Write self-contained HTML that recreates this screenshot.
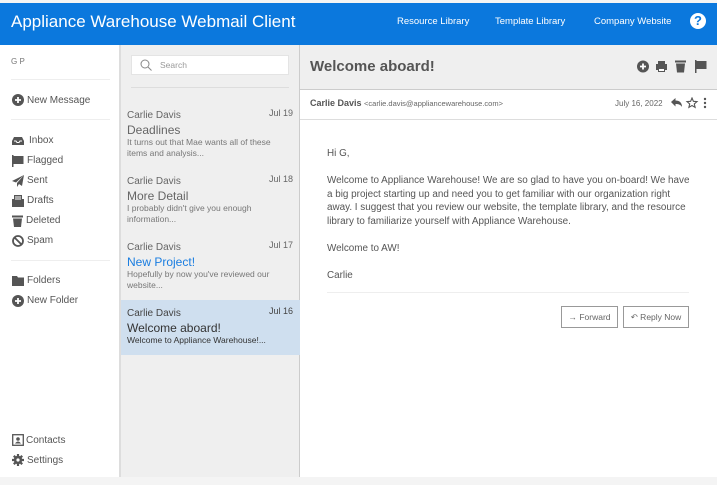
<!DOCTYPE html>
<html><head><style>
*{margin:0;padding:0;box-sizing:border-box}
body{width:717px;height:485px;overflow:hidden;background:#f4f4f4;font-family:"Liberation Sans",sans-serif;color:#555;position:relative}
.a{position:absolute;white-space:nowrap}
#hdr{left:0;top:3px;width:717px;height:42px;background:#0b78dd}
#side{left:0;top:45px;width:121px;height:432px;background:#fff;border-right:2px solid #ddd}
#list{left:121px;top:45px;width:179px;height:432px;background:#efefef;border-right:1px solid #ccc}
#main{left:300px;top:45px;width:417px;height:432px;background:#fff}
.nav{font-size:10px;color:#555}
.ic{position:absolute;left:12px;width:12px;height:12px}
.hr{position:absolute;height:1px;background:#eee}
.sn{font-size:10px;color:#666}
.dt{font-size:9px;color:#666}
.sub{font-size:12px;color:#666}
.pv{font-size:8.5px;color:#777;line-height:11px;white-space:normal;width:160px}
.btn{position:absolute;top:261px;height:22px;border:1px solid #999;font-size:8.5px;color:#666;text-align:center;line-height:20px;background:#fff}
</style></head><body>
<div class="a" id="hdr">
<div class="a" style="left:11px;top:9px;font-size:17px;color:#fff">Appliance Warehouse Webmail Client</div>
<div class="a" style="left:397px;top:13px;font-size:9.5px;color:#fff">Resource Library</div>
<div class="a" style="left:495px;top:13px;font-size:9.5px;color:#fff">Template Library</div>
<div class="a" style="left:594px;top:13px;font-size:9.5px;color:#fff">Company Website</div>
<div class="a" style="left:690px;top:10px;width:16px;height:16px;border-radius:50%;background:#fff;color:#0b78dd;font-weight:bold;font-size:13px;text-align:center;line-height:16px">?</div>
</div>
<div class="a" id="side">
<div class="a" style="left:11px;top:12px;font-size:8px;color:#777">G P</div>
<div class="hr" style="left:11px;top:34px;width:99px"></div>
<div class="hr" style="left:11px;top:74px;width:99px"></div>
<div class="hr" style="left:11px;top:215px;width:99px"></div>
<svg class="ic" style="top:49px" viewBox="0 0 12 12"><circle cx="6" cy="6" r="6" fill="#555"/><path d="M6 3v6M3 6h6" stroke="#fff" stroke-width="1.8"/></svg>
<div class="a nav" style="left:27px;top:50px">New Message</div>
<svg class="ic" style="top:90px" viewBox="0 0 12 12"><path d="M0 6l2-4h8l2 4v4H0z" fill="#555"/><path d="M2 6h2l1 1.5h2L8 6h2" stroke="#fff" stroke-width="1" fill="none"/></svg>
<div class="a nav" style="left:29px;top:90px">Inbox</div>
<svg class="ic" style="top:110px" viewBox="0 0 12 12"><path d="M0 0h1.5v12H0zM1.5 1h10v8h-10z" fill="#555"/></svg>
<div class="a nav" style="left:27px;top:110px">Flagged</div>
<svg class="ic" style="top:130px" viewBox="0 0 12 12"><path d="M12 0L0 6l4 1.5L12 0 5 8v4l2-3 3 2z" fill="#555"/></svg>
<div class="a nav" style="left:27px;top:130px">Sent</div>
<svg class="ic" style="top:150px" viewBox="0 0 12 12"><rect x="0" y="4" width="12" height="8" fill="#555"/><rect x="2" y="0" width="8" height="6" fill="#555"/><path d="M3 2h6M3 4h6" stroke="#fff"/></svg>
<div class="a nav" style="left:27px;top:150px">Drafts</div>
<svg class="ic" style="top:170px" viewBox="0 0 12 12"><rect x="0" y="0.5" width="11" height="2" fill="#555"/><path d="M1 3.5h9l-1 8.5H2z" fill="#555"/></svg>
<div class="a nav" style="left:26px;top:170px">Deleted</div>
<svg class="ic" style="top:190px" viewBox="0 0 12 12"><circle cx="6" cy="6" r="5" stroke="#555" stroke-width="1.8" fill="none"/><path d="M2.5 2.5l7 7" stroke="#555" stroke-width="1.8"/></svg>
<div class="a nav" style="left:27px;top:190px">Spam</div>
<svg class="ic" style="top:230px" viewBox="0 0 12 12"><path d="M0 1h5l1 1.5h6V11H0z" fill="#555"/></svg>
<div class="a nav" style="left:27px;top:230px">Folders</div>
<svg class="ic" style="top:250px" viewBox="0 0 12 12"><circle cx="6" cy="6" r="6" fill="#555"/><path d="M6 3v6M3 6h6" stroke="#fff" stroke-width="1.8"/></svg>
<div class="a nav" style="left:27px;top:250px">New Folder</div>
<svg class="ic" style="top:389px" viewBox="0 0 12 12"><rect x="0.7" y="0.7" width="10.6" height="10.6" stroke="#555" stroke-width="1.3" fill="none"/><circle cx="6" cy="5" r="1.8" fill="#555"/><path d="M3 9.5q3-4 6 0z" fill="#555"/></svg>
<div class="a nav" style="left:26px;top:390px">Contacts</div>
<svg class="ic" style="top:409px" viewBox="0 0 12 12"><circle cx="6" cy="6" r="4.2" fill="#555"/><path d="M6 0v12M0 6h12M1.8 1.8l8.4 8.4M10.2 1.8l-8.4 8.4" stroke="#555" stroke-width="2.2"/><circle cx="6" cy="6" r="1.6" fill="#fff"/></svg>
<div class="a nav" style="left:27px;top:410px">Settings</div>
</div>
<div class="a" id="list">
<div class="a" style="left:10px;top:10px;width:158px;height:20px;background:#fff;border:1px solid #e4e4e4"></div>
<svg class="a" style="left:19px;top:14px" width="12" height="12" viewBox="0 0 12 12"><circle cx="5" cy="5" r="4" stroke="#888" fill="none"/><path d="M8 8l3.5 3.5" stroke="#888"/></svg>
<div class="a" style="left:39px;top:15px;font-size:8.5px;color:#999">Search</div>
<div class="hr" style="left:10px;top:42px;width:158px;background:#ddd"></div>
<div class="a sn" style="left:6px;top:65px">Carlie Davis</div><div class="a dt" style="left:148px;top:63px">Jul 19</div>
<div class="a sub" style="left:6px;top:78px">Deadlines</div>
<div class="a pv" style="left:6px;top:92px">It turns out that Mae wants all of these items and analysis...</div>
<div class="a sn" style="left:6px;top:131px">Carlie Davis</div><div class="a dt" style="left:148px;top:129px">Jul 18</div>
<div class="a sub" style="left:6px;top:144px">More Detail</div>
<div class="a pv" style="left:6px;top:158px">I probably didn't give you enough information...</div>
<div class="a sn" style="left:6px;top:197px">Carlie Davis</div><div class="a dt" style="left:148px;top:195px">Jul 17</div>
<div class="a sub" style="left:6px;top:210px;color:#1a7de0">New Project!</div>
<div class="a pv" style="left:6px;top:224px">Hopefully by now you've reviewed our website...</div>
<div class="a" style="left:0;top:255px;width:179px;height:55px;background:#cfdfef"></div>
<div class="a sn" style="left:6px;top:263px;color:#444">Carlie Davis</div><div class="a dt" style="left:148px;top:261px;color:#444">Jul 16</div>
<div class="a sub" style="left:6px;top:276px;color:#333">Welcome aboard!</div>
<div class="a pv" style="left:6px;top:290px;color:#333">Welcome to Appliance Warehouse!...</div>
</div>
<div class="a" id="main">
<div class="a" style="left:0;top:0;width:417px;height:45px;background:#efefef;border-bottom:1px solid #ccc"></div>
<div class="a" style="left:10px;top:13px;font-size:15px;font-weight:bold;color:#555">Welcome aboard!</div>
<svg class="a" style="left:337px;top:15px" width="75" height="13" viewBox="0 0 75 13"><circle cx="6" cy="6.5" r="6" fill="#555"/><path d="M6 3.5v6M3 6.5h6" stroke="#fff" stroke-width="1.8"/><path d="M21 1h7v3h-7z M19 4h11v6H19z M21 8h7v4h-7z" fill="#555"/><rect x="22" y="9" width="5" height="2" fill="#fff"/><rect x="38" y="0.5" width="11" height="2" fill="#555"/><path d="M39 3.5h9l-1 9h-7z" fill="#555"/><path d="M58 0h1.5v13H58zM59.5 1h10v8h-10z" fill="#555"/></svg>
<div class="a" style="left:10px;top:53px;font-size:9px;font-weight:bold;color:#555">Carlie Davis <span style="font-weight:normal;font-size:7.5px;color:#666">&lt;carlie.davis@appliancewarehouse.com&gt;</span></div>
<div class="a" style="left:315px;top:54px;font-size:8px;color:#666">July 16, 2022</div>
<svg class="a" style="left:371px;top:52px" width="38" height="12" viewBox="0 0 38 12"><path d="M0 5l4.5-4v2.5c4 0 6.5 2 6.5 6.5-1.5-2.5-3.5-3-6.5-3V9.5z" fill="#555"/><path d="M21 1l1.4 3.3 3.6.3-2.7 2.3.8 3.5-3.1-1.9-3.1 1.9.8-3.5-2.7-2.3 3.6-.3z" stroke="#555" stroke-width="1.1" fill="none"/><circle cx="34" cy="2" r="1.2" fill="#555"/><circle cx="34" cy="6" r="1.2" fill="#555"/><circle cx="34" cy="10" r="1.2" fill="#555"/></svg>
<div class="hr" style="left:0;top:74px;width:417px;background:#ddd"></div>
<div class="a" style="left:27px;top:102px;font-size:9.9px;line-height:13.5px;color:#555;white-space:normal;width:364px">Hi G,<br><br>Welcome to Appliance Warehouse! We are so glad to have you on-board! We have a big project starting up and need you to get familiar with our organization right away. I suggest that you review our website, the template library, and the resource library to familiarize yourself with Appliance Warehouse.<br><br>Welcome to AW!<br><br>Carlie</div>
<div class="hr" style="left:27px;top:247px;width:362px"></div>
<div class="btn" style="left:261px;width:57px">&#8594; Forward</div>
<div class="btn" style="left:323px;width:66px">&#8630; Reply Now</div>
</div>
</body></html>
